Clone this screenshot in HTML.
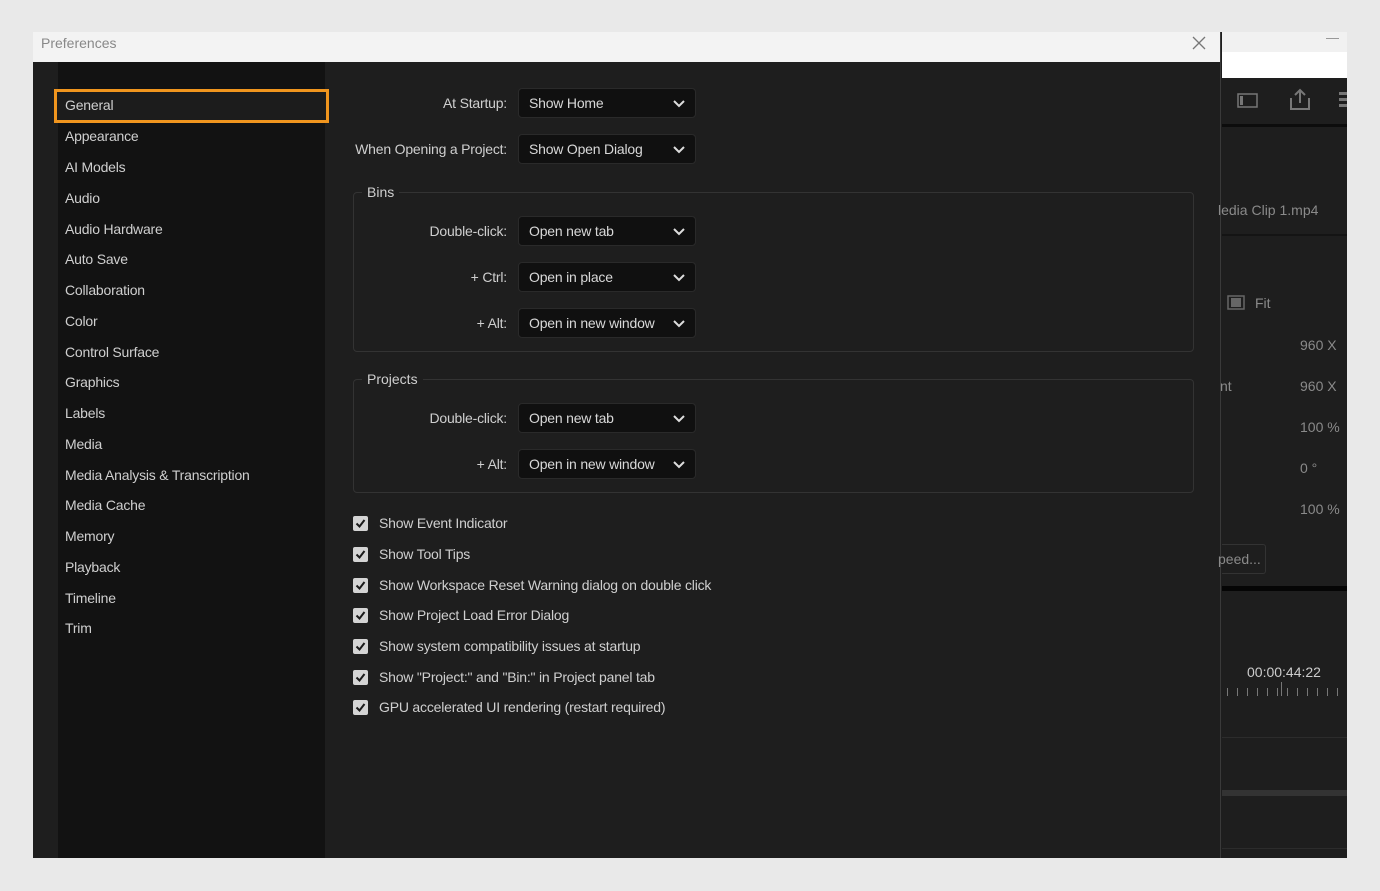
<!DOCTYPE html>
<html><head><style>
*{margin:0;padding:0;box-sizing:border-box}
body{width:1380px;height:891px;background:#e9e9e9;position:relative;overflow:hidden;font-family:"Liberation Sans",sans-serif;color:#c8c8c8;font-size:14px}
.a{position:absolute}
.title{left:33px;top:32px;width:1187px;height:30px;background:#f3f3f3;color:#888;font-size:14px;padding:3px 8px}
.main{left:33px;top:62px;width:1187px;height:796px;background:#1e1e1e}
.list{left:58px;top:62px;width:267px;height:796px;background:#121212}
.item{position:absolute;left:65px;font-size:14px;color:#cfcfcf;letter-spacing:-0.2px}
.sel{left:54px;top:89px;width:275px;height:34px;border:3px solid #f0951e;background:#1c1c1c}
.lbl{position:absolute;right:873px;text-align:right;font-size:14px;color:#cfcfcf;letter-spacing:-0.2px}
.dd{position:absolute;left:518px;width:178px;height:30px;background:#101010;border:1px solid #2a2a2a;border-radius:4px;color:#d8d8d8;padding:6px 10px;font-size:14px;letter-spacing:-0.2px}
.dd svg{position:absolute;right:10px;top:10px}
.fs{position:absolute;left:353px;width:841px;border:1px solid #333;border-radius:4px}
.leg{position:absolute;left:362px;background:#1e1e1e;padding:0 5px;color:#cfcfcf}
.cb{position:absolute;left:353px;width:15px;height:15px;background:#d4d4d4;border-radius:2px}
.cb svg{position:absolute;left:2px;top:2px}
.ct{position:absolute;left:379px;color:#cfcfcf;letter-spacing:-0.2px}
.app{left:1221px;top:32px;width:126px;height:826px;background:#1e1e1e;overflow:hidden}
.g{color:#8a8a8a;font-size:14px;position:absolute}
</style></head><body>
<div class="a title">Preferences</div>
<svg class="a" style="left:1191px;top:35px" width="16" height="16"><path d="M2 2L14 14M14 2L2 14" stroke="#777" stroke-width="1.3"/></svg>
<div class="a main"></div>
<div class="a list"></div>
<div class="a sel"></div>
<div class="item" style="top:97px">General</div>
<div class="item" style="top:128px">Appearance</div>
<div class="item" style="top:159px">AI Models</div>
<div class="item" style="top:190px">Audio</div>
<div class="item" style="top:221px">Audio Hardware</div>
<div class="item" style="top:251px">Auto Save</div>
<div class="item" style="top:282px">Collaboration</div>
<div class="item" style="top:313px">Color</div>
<div class="item" style="top:344px">Control Surface</div>
<div class="item" style="top:374px">Graphics</div>
<div class="item" style="top:405px">Labels</div>
<div class="item" style="top:436px">Media</div>
<div class="item" style="top:467px">Media Analysis &amp; Transcription</div>
<div class="item" style="top:497px">Media Cache</div>
<div class="item" style="top:528px">Memory</div>
<div class="item" style="top:559px">Playback</div>
<div class="item" style="top:590px">Timeline</div>
<div class="item" style="top:620px">Trim</div>

<div class="lbl" style="top:95px">At Startup:</div>
<div class="dd" style="top:88px">Show Home<svg width="12" height="9"><path d="M1 2L6 7L11 2" stroke="#ddd" stroke-width="2" fill="none"/></svg></div>
<div class="lbl" style="top:141px">When Opening a Project:</div>
<div class="dd" style="top:134px">Show Open Dialog<svg width="12" height="9"><path d="M1 2L6 7L11 2" stroke="#ddd" stroke-width="2" fill="none"/></svg></div>

<div class="fs" style="top:192px;height:160px"></div>
<div class="leg" style="top:184px">Bins</div>
<div class="lbl" style="top:223px">Double-click:</div>
<div class="dd" style="top:216px">Open new tab<svg width="12" height="9"><path d="M1 2L6 7L11 2" stroke="#ddd" stroke-width="2" fill="none"/></svg></div>
<div class="lbl" style="top:269px">+ Ctrl:</div>
<div class="dd" style="top:262px">Open in place<svg width="12" height="9"><path d="M1 2L6 7L11 2" stroke="#ddd" stroke-width="2" fill="none"/></svg></div>
<div class="lbl" style="top:315px">+ Alt:</div>
<div class="dd" style="top:308px">Open in new window<svg width="12" height="9"><path d="M1 2L6 7L11 2" stroke="#ddd" stroke-width="2" fill="none"/></svg></div>

<div class="fs" style="top:379px;height:114px"></div>
<div class="leg" style="top:371px">Projects</div>
<div class="lbl" style="top:410px">Double-click:</div>
<div class="dd" style="top:403px">Open new tab<svg width="12" height="9"><path d="M1 2L6 7L11 2" stroke="#ddd" stroke-width="2" fill="none"/></svg></div>
<div class="lbl" style="top:456px">+ Alt:</div>
<div class="dd" style="top:449px">Open in new window<svg width="12" height="9"><path d="M1 2L6 7L11 2" stroke="#ddd" stroke-width="2" fill="none"/></svg></div>

<div class="cb" style="top:516px"><svg width="11" height="11"><path d="M1.5 5.5L4.5 8.5L9.5 2" stroke="#1a1a1a" stroke-width="2" fill="none"/></svg></div><div class="ct" style="top:515px">Show Event Indicator</div>
<div class="cb" style="top:547px"><svg width="11" height="11"><path d="M1.5 5.5L4.5 8.5L9.5 2" stroke="#1a1a1a" stroke-width="2" fill="none"/></svg></div><div class="ct" style="top:546px">Show Tool Tips</div>
<div class="cb" style="top:578px"><svg width="11" height="11"><path d="M1.5 5.5L4.5 8.5L9.5 2" stroke="#1a1a1a" stroke-width="2" fill="none"/></svg></div><div class="ct" style="top:577px">Show Workspace Reset Warning dialog on double click</div>
<div class="cb" style="top:608px"><svg width="11" height="11"><path d="M1.5 5.5L4.5 8.5L9.5 2" stroke="#1a1a1a" stroke-width="2" fill="none"/></svg></div><div class="ct" style="top:607px">Show Project Load Error Dialog</div>
<div class="cb" style="top:639px"><svg width="11" height="11"><path d="M1.5 5.5L4.5 8.5L9.5 2" stroke="#1a1a1a" stroke-width="2" fill="none"/></svg></div><div class="ct" style="top:638px">Show system compatibility issues at startup</div>
<div class="cb" style="top:670px"><svg width="11" height="11"><path d="M1.5 5.5L4.5 8.5L9.5 2" stroke="#1a1a1a" stroke-width="2" fill="none"/></svg></div><div class="ct" style="top:669px">Show "Project:" and "Bin:" in Project panel tab</div>
<div class="cb" style="top:700px"><svg width="11" height="11"><path d="M1.5 5.5L4.5 8.5L9.5 2" stroke="#1a1a1a" stroke-width="2" fill="none"/></svg></div><div class="ct" style="top:699px">GPU accelerated UI rendering (restart required)</div>

<div class="a" style="left:1220px;top:32px;width:2px;height:826px;background:#3a3a3a"></div>
<div class="a app"></div>
<div class="a" style="left:1222px;top:32px;width:125px;height:20px;background:#f1f1f1"></div>
<div class="a" style="left:1222px;top:52px;width:125px;height:26px;background:#fff"></div>
<div class="a" style="left:1326px;top:38px;width:13px;height:1px;background:#999"></div>
<svg class="a" style="left:1237px;top:92px" width="22" height="18"><rect x="1" y="2" width="19" height="13" fill="none" stroke="#777" stroke-width="1.5"/><rect x="3" y="4" width="3" height="9" fill="#777"/></svg>
<svg class="a" style="left:1288px;top:88px" width="24" height="24"><path d="M3 10V21H21V10M12 15V2M7 7L12 2L17 7" stroke="#777" stroke-width="2" fill="none"/></svg>
<div class="a" style="left:1339px;top:92px;width:8px;height:18px;background:repeating-linear-gradient(#777 0 3px,transparent 3px 6px)"></div>
<div class="a" style="left:1222px;top:124px;width:125px;height:3px;background:#0c0c0c"></div>
<div class="g" style="left:1218px;top:202px">ledia Clip 1.mp4</div>
<div class="a" style="left:1222px;top:234px;width:125px;height:2px;background:#141414"></div>
<svg class="a" style="left:1227px;top:295px" width="20" height="16"><rect x="1" y="1" width="16" height="13" fill="none" stroke="#666" stroke-width="1.5"/><rect x="4" y="3" width="10" height="9" fill="#666"/></svg>
<div class="g" style="left:1255px;top:295px">Fit</div>
<div class="g" style="left:1300px;top:337px">960 X</div>
<div class="g" style="left:1220px;top:378px">nt</div>
<div class="g" style="left:1300px;top:378px">960 X</div>
<div class="g" style="left:1300px;top:419px">100 %</div>
<div class="g" style="left:1300px;top:460px">0 °</div>
<div class="g" style="left:1300px;top:501px">100 %</div>
<div class="a" style="left:1222px;top:544px;width:44px;height:30px;border:1px solid #333;border-left:none;border-radius:0 3px 3px 0"></div>
<div class="g" style="left:1218px;top:551px">peed...</div>
<div class="a" style="left:1222px;top:586px;width:125px;height:5px;background:#050505"></div>
<div class="a" style="left:1247px;top:664px;color:#ccc;font-size:14px">00:00:44:22</div>
<div class="a" style="left:1227px;top:688px;width:120px;height:8px;background:repeating-linear-gradient(90deg,#777 0 1px,transparent 1px 10px)"></div>
<div class="a" style="left:1281px;top:682px;width:1px;height:14px;background:#777"></div>
<div class="a" style="left:1222px;top:737px;width:125px;height:1px;background:#2c2c2c"></div>
<div class="a" style="left:1222px;top:790px;width:125px;height:6px;background:#333"></div>
<div class="a" style="left:1222px;top:848px;width:125px;height:1px;background:#2c2c2c"></div>
</body></html>
